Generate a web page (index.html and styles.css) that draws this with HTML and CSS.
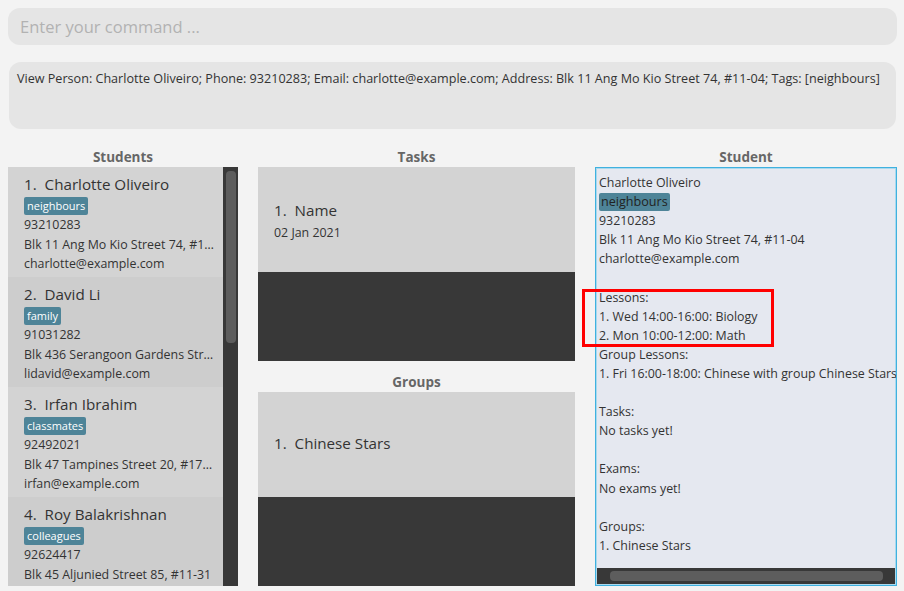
FILE: index.html
```html
<!DOCTYPE html>
<html>
<head>
<meta charset="utf-8">
<link rel="stylesheet" href="styles.css">
</head>
<body>
<div class="app">
  <div class="command">
    <input class="command-input" type="text" placeholder="Enter your command ...">
  </div>
  <div class="result">View Person: Charlotte Oliveiro; Phone: 93210283; Email: charlotte@example.com; Address: Blk 11 Ang Mo Kio Street 74, #11-04; Tags: [neighbours]</div>
  <div class="columns">
    <div class="col col-students">
      <div class="col-title">Students</div>
      <div class="student-list">
        <div class="cards">
          <div class="card">
            <div class="card-name">1.&nbsp;&nbsp;Charlotte Oliveiro</div>
            <div class="tags"><span class="tag">neighbours</span></div>
            <div class="line">93210283</div>
            <div class="line">Blk 11 Ang Mo Kio Street 74, #11-04</div>
            <div class="line">charlotte@example.com</div>
          </div>
          <div class="card alt">
            <div class="card-name">2.&nbsp;&nbsp;David Li</div>
            <div class="tags"><span class="tag">family</span></div>
            <div class="line">91031282</div>
            <div class="line">Blk 436 Serangoon Gardens Street 26, #16-43</div>
            <div class="line">lidavid@example.com</div>
          </div>
          <div class="card">
            <div class="card-name">3.&nbsp;&nbsp;Irfan Ibrahim</div>
            <div class="tags"><span class="tag">classmates</span></div>
            <div class="line">92492021</div>
            <div class="line">Blk 47 Tampines Street 20, #17-35</div>
            <div class="line">irfan@example.com</div>
          </div>
          <div class="card alt">
            <div class="card-name">4.&nbsp;&nbsp;Roy Balakrishnan</div>
            <div class="tags"><span class="tag">colleagues</span></div>
            <div class="line">92624417</div>
            <div class="line">Blk 45 Aljunied Street 85, #11-31</div>
            <div class="line">royb@example.com</div>
          </div>
        </div>
        <div class="vscroll"><div class="vthumb"></div></div>
      </div>
    </div>
    <div class="col col-mid">
      <div class="col-title">Tasks</div>
      <div class="mid-list">
        <div class="mid-card task-card">
          <div class="card-name">1.&nbsp;&nbsp;Name</div>
          <div class="mid-date">02 Jan 2021</div>
        </div>
      </div>
      <div class="col-title groups-title">Groups</div>
      <div class="mid-list">
        <div class="mid-card">
          <div class="card-name">1.&nbsp;&nbsp;Chinese Stars</div>
        </div>
      </div>
    </div>
    <div class="col col-detail">
      <div class="col-title">Student</div>
      <div class="detail">
        <div class="detail-body">
          <div class="dline">Charlotte Oliveiro</div>
          <div class="dline"><span class="dtag">neighbours</span></div>
          <div class="dline">93210283</div>
          <div class="dline">Blk 11 Ang Mo Kio Street 74, #11-04</div>
          <div class="dline">charlotte@example.com</div>
          <div class="dline">&nbsp;</div>
          <div class="dline">Lessons:</div>
          <div class="dline">1. Wed 14:00-16:00: Biology</div>
          <div class="dline">2. Mon 10:00-12:00: Math</div>
          <div class="dline">Group Lessons:</div>
          <div class="dline">1. Fri 16:00-18:00: Chinese with group Chinese Stars</div>
          <div class="dline">&nbsp;</div>
          <div class="dline">Tasks:</div>
          <div class="dline">No tasks yet!</div>
          <div class="dline">&nbsp;</div>
          <div class="dline">Exams:</div>
          <div class="dline">No exams yet!</div>
          <div class="dline">&nbsp;</div>
          <div class="dline">Groups:</div>
          <div class="dline">1. Chinese Stars</div>
        </div>
        <div class="hscroll"><div class="hthumb"></div></div>
      </div>
    </div>
  </div>
  <div class="highlight"></div>
</div>
</body>
</html>
```
FILE: styles.css
```css
html, body {
  margin: 0;
  padding: 0;
  background: #f3f3f3;
}
body {
  font-family: "Open Sans", "Noto Sans", sans-serif;
  color: #333;
}
.app {
  position: relative;
  width: 904px;
  height: 591px;
  box-sizing: border-box;
  padding: 8px 7px 5px 8px;
  display: flex;
  flex-direction: column;
}
.command {
  height: 37px;
  background: #e5e5e5;
  border-radius: 12px;
  display: flex;
  align-items: center;
}
.command-input {
  border: none;
  outline: none;
  background: transparent;
  font-family: "Open Sans", "Noto Sans", sans-serif;
  font-size: 16.5px;
  color: #333;
  padding: 0 0 0 12px;
  width: 100%;
}
.command-input::placeholder {
  color: #b2b2b2;
}
.result {
  margin: 17px 1px 0 1px;
  height: 67px;
  box-sizing: border-box;
  background: #e5e5e5;
  border-radius: 12px;
  padding: 8px 8px;
  font-size: 12.6px;
  line-height: 18px;
  color: #333;
  white-space: nowrap;
  overflow: hidden;
}
.columns {
  flex: 1;
  display: flex;
  gap: 20px;
  margin-top: 19px;
  min-height: 0;
}
.col {
  display: flex;
  flex-direction: column;
}
.col-students { width: 230px; }
.col-mid { width: 317px; }
.col-detail { width: 302px; }
.col-title {
  text-align: center;
  font-weight: bold;
  font-size: 13.5px;
  color: #666;
  height: 19px;
  line-height: 19px;
}
.groups-title {
  margin-top: 12px;
}
.student-list {
  flex: 1;
  display: flex;
  min-height: 0;
  overflow: hidden;
}
.cards {
  flex: 1;
  min-width: 0;
}
.card {
  height: 110px;
  box-sizing: border-box;
  background: #d3d3d3;
  padding: 7px 8px 0 16px;
}
.card.alt {
  background: #cdcdcd;
}
.card-name {
  font-size: 15.2px;
  line-height: 20px;
  color: #333;
}
.tags {
  margin-top: 3px;
  height: 18px;
  display: flex;
}
.tag {
  background: #4e8498;
  color: #fff;
  font-size: 11px;
  line-height: 18px;
  padding: 0 3px;
  border-radius: 2px;
}
.line {
  font-size: 12.4px;
  line-height: 19.5px;
  white-space: nowrap;
  overflow: hidden;
  text-overflow: ellipsis;
}
.vscroll {
  width: 15px;
  background: #383838;
  padding: 4px 2px 0 3px;
  box-sizing: border-box;
}
.vthumb {
  height: 172px;
  background: #5d5d5d;
  border-radius: 4px;
}
.mid-list {
  height: 194px;
  background: #383838;
}
.mid-card {
  height: 105px;
  box-sizing: border-box;
  background: #d3d3d3;
  padding: 0 0 3px 16px;
  display: flex;
  flex-direction: column;
  justify-content: center;
}
.task-card {
  padding: 2px 0 0 16px;
}
.mid-date {
  font-size: 12.4px;
  line-height: 19px;
  margin-top: 3px;
}
.detail {
  flex: 1;
  min-height: 0;
  background: #e5e8f0;
  border: 1px solid #3fb1df;
  box-shadow: inset 0 0 0 1px #a9d9ee;
  display: flex;
  flex-direction: column;
  overflow: hidden;
}
.detail-body {
  flex: 1;
  padding: 5px 0 0 3px;
  overflow: hidden;
  white-space: nowrap;
}
.dline {
  font-size: 12.4px;
  line-height: 19.1px;
  height: 19.1px;
}
.dtag {
  display: inline-block;
  background: #4e8498;
  color: #222;
  font-size: 12.6px;
  line-height: 18px;
  padding: 0 2px;
  border-radius: 2px;
}
.hscroll {
  height: 16px;
  background: #383838;
  padding: 3px 12px 3px 13px;
  box-sizing: border-box;
  margin: 0 1px 1px 1px;
}
.hthumb {
  height: 10px;
  background: #5d5d5d;
  border-radius: 4px;
}
.highlight {
  position: absolute;
  left: 582px;
  top: 289px;
  width: 192px;
  height: 58px;
  box-sizing: border-box;
  border: 3px solid #ff0000;
  pointer-events: none;
}
```
